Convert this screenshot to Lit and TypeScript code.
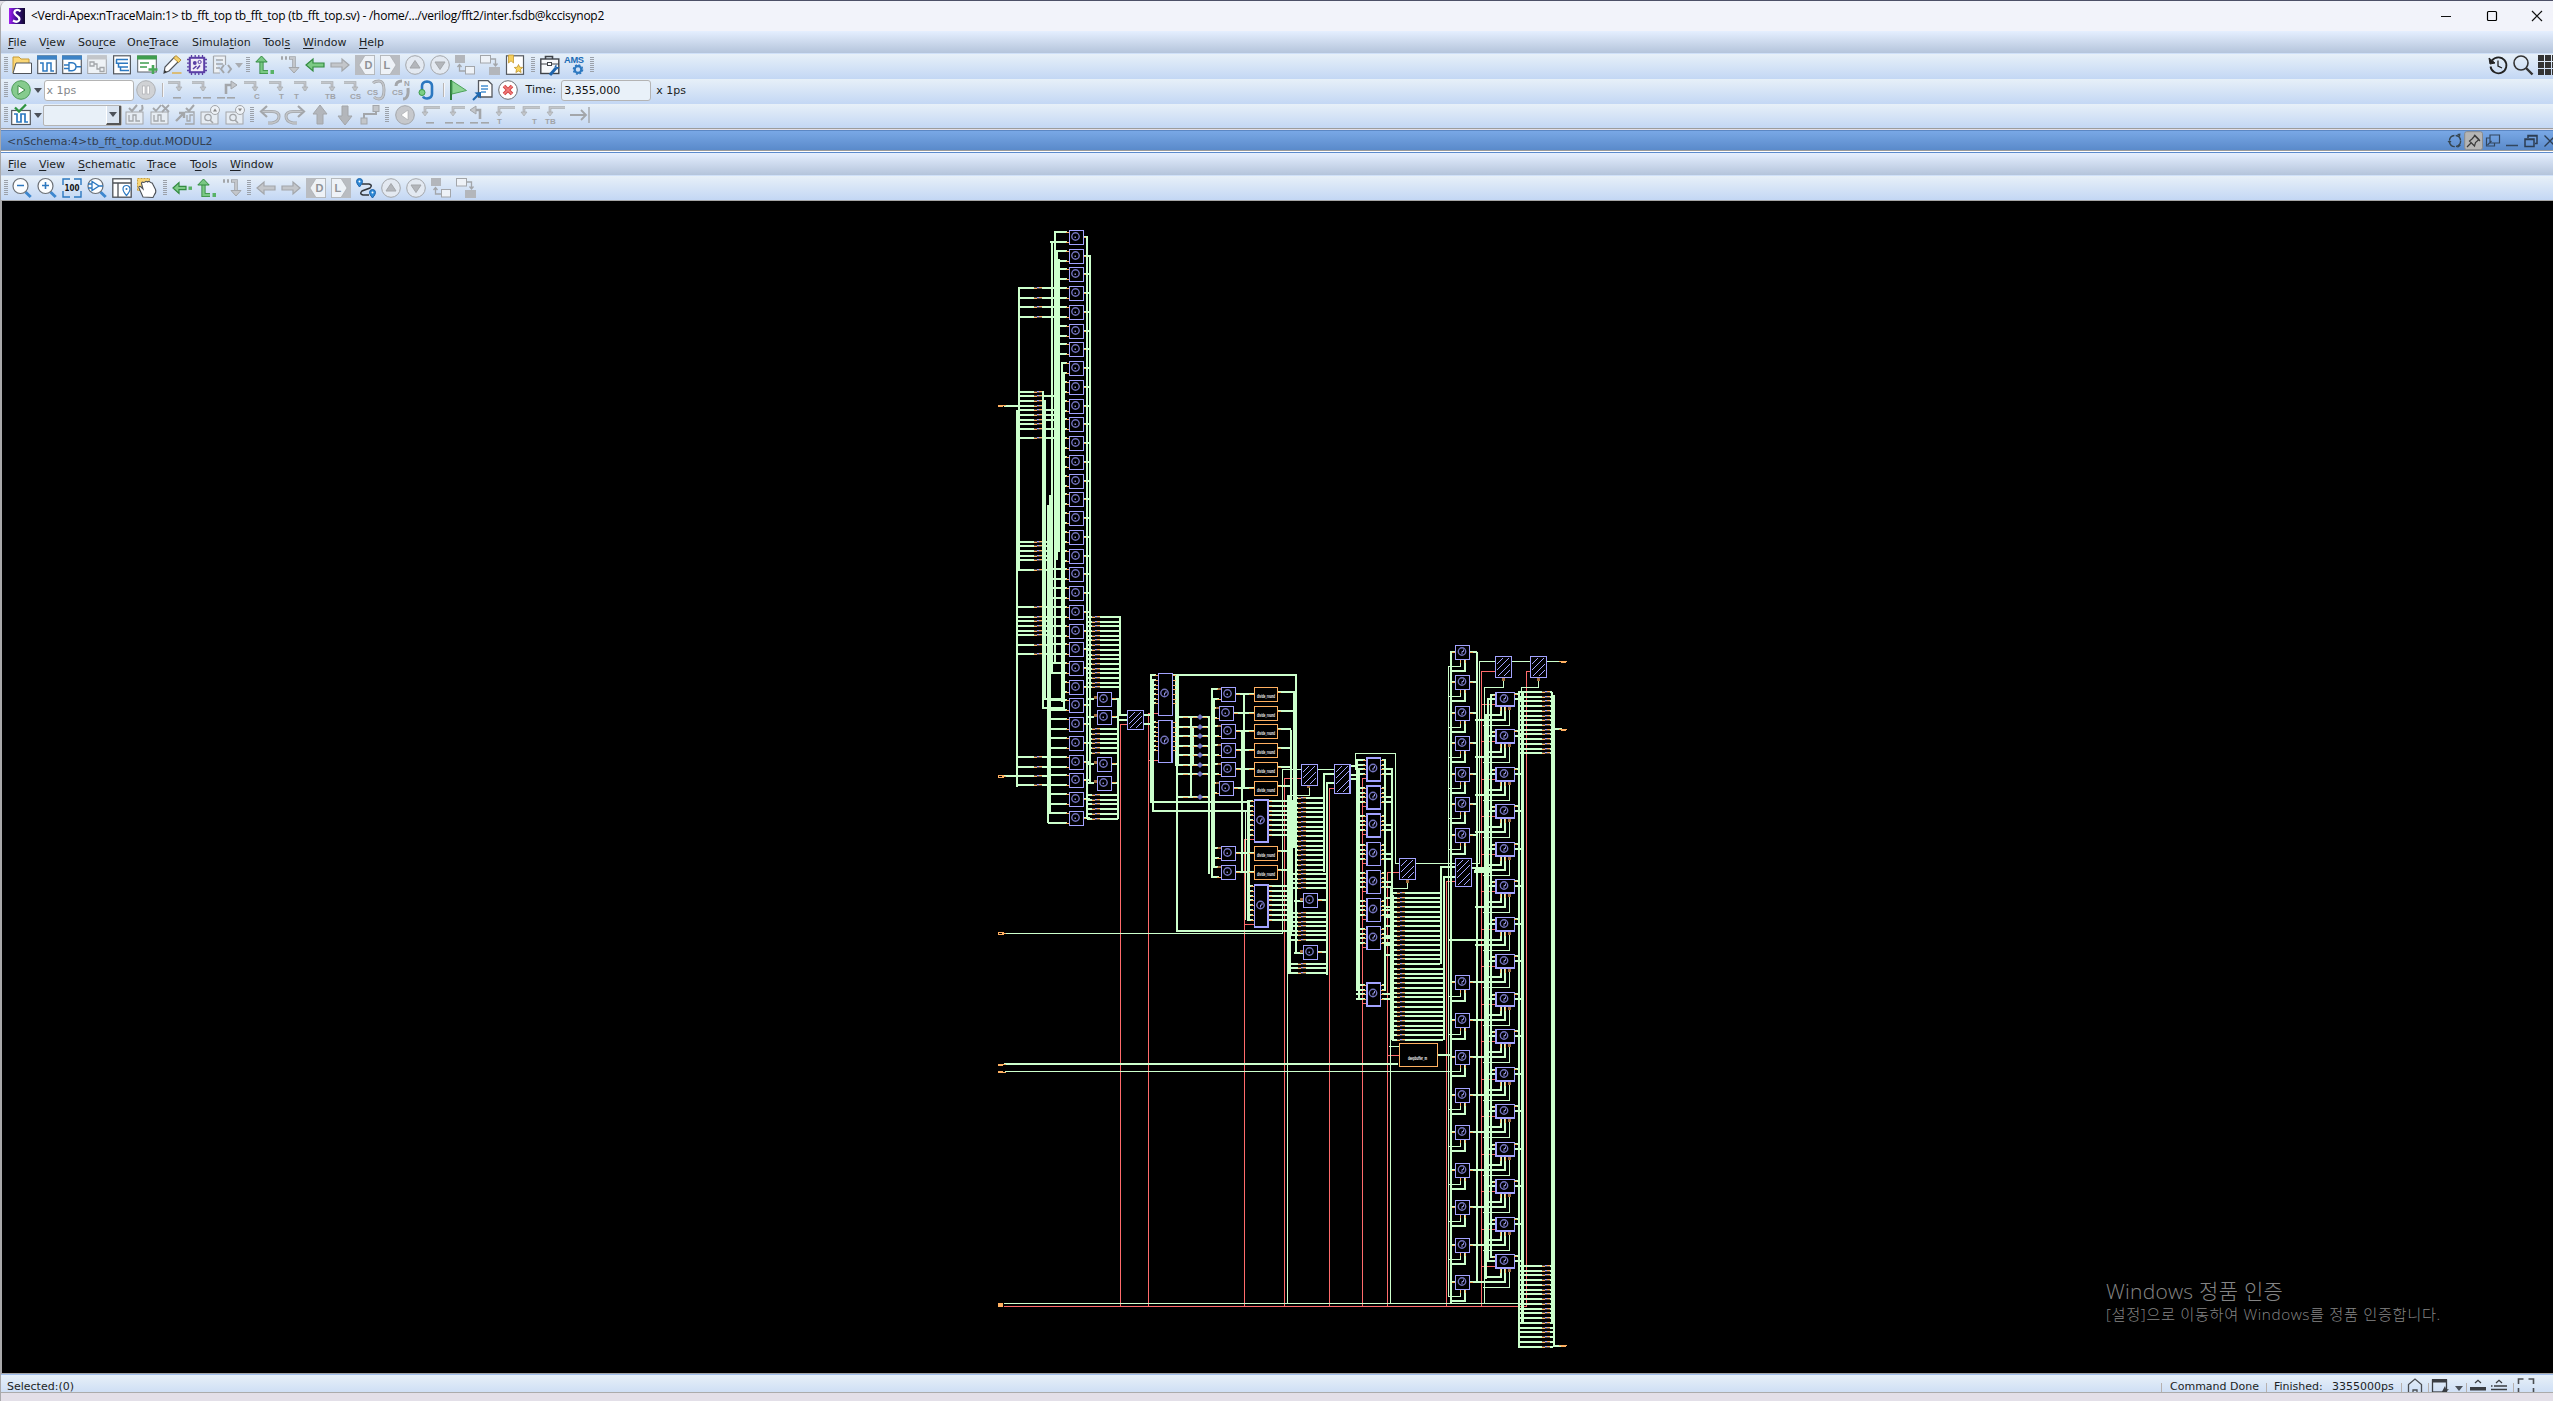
import { LitElement, html, css, svg, nothing } from "lit";
import { customElement } from "lit/decorators.js";

/* ---------- toolbar icons, drawn on a 20x20 grid ---------- */
const G = "#a3a6aa";
const LG = "#c3c6ca";
const arrowDown = (x: number, y: number) => svg`<path d="M${x - 3} ${y - 4}h6l-3 4z" fill=${LG} stroke=${G} stroke-width=".6"/>`;
const glyph = (t: string, x: number, y: number) =>
  svg`<text x=${x} y=${y} font-size="8" font-weight="700" fill="#a0a3a8" font-family="Liberation Sans,sans-serif">${t}</text>`;
const dash = (...xs: number[]) => xs.map((x) => svg`<rect x=${x} y="17" width="8" height="1.6" fill=${G}/>`);
const step = (sx: number, t = "", tx = 8) => svg`
  <path d="M${sx} 2.5h11v8" fill="none" stroke=${G} stroke-width="2.6"/>
  <path d="M${sx} 2.5h11v8" fill="none" stroke=${LG} stroke-width="1.4"/>
  ${arrowDown(sx + 11, 11)}
  ${t ? glyph(t, tx, 19) : nothing}`;
const back = (sx: number, t = "", tx = 1) => svg`
  <path d="M20 2.5h-${20 - sx}v6" fill="none" stroke=${G} stroke-width="2.6"/>
  <path d="M20 2.5h-${20 - sx}v6" fill="none" stroke=${LG} stroke-width="1.4"/>
  ${arrowDown(sx, 11)}
  ${t ? glyph(t, tx, 19) : nothing}`;
const hArrow = (fill: string, stroke: string, left: boolean) => svg`
  <path d=${left ? "M1 10l7-6v4h11v4H8v4z" : "M19 10l-7-6v4H1v4h11v4z"} fill=${fill} stroke=${stroke} stroke-width="1.2"/>`;
const disc = svg`<circle cx="10" cy="10" r="9.3" fill="#e3e9f1" stroke=${G} stroke-width="1"/>`;
const win = (bar: string) => svg`<rect x=".7" y="1" width="18.6" height="17.5" fill="#fff" stroke="#5a5f66" stroke-width="1.2"/>
  <rect x="0" y=".5" width="20" height="4.2" fill=${bar}/>`;
const lens = (inner: unknown) => svg`
  <path d="M13.5 14l5.2 5" stroke="#3d87cf" stroke-width="3"/>
  <circle cx="8.5" cy="8" r="7.5" fill="#fbfdff" stroke="#6b7076" stroke-width="1.2"/>${inner}`;
const wave = (c: string, x = 0) => svg`<path d="M${3 + x} 8h3v8h4V8h4v8h3" fill="none" stroke=${c} stroke-width="1.5"/>`;
const box = svg`<rect x="1" y="7" width="17" height="12" fill="#e6ecf3" stroke=${G}/>`;

const ICONS: Record<string, unknown> = {
  folder: svg`<path d="M1 18V2h6l2 2h8v4" fill="#fbd775" stroke="#c79a35"/><path d="M1 18.5L4 8h15.5v10.5z" fill="#fff" stroke="#50545a"/>`,
  wave: svg`${win("#3d83c6")}${wave("#2c78c0")}`,
  gate: svg`${win("#3d83c6")}<path d="M2 10h5M2 13.500h5M14 11.700h5M7 7.700h3q4 .5 4 4t-4 4H7z" fill="none" stroke="#2c78c0" stroke-width="1.4"/>`,
  flow: svg`<rect x=".7" y="1" width="18.600" height="17.500" fill="#eef2f6" stroke=${G}/><rect x="0" y=".5" width="20" height="4" fill=${LG}/><path d="M3 7h4v4H3zM7 9h3v5h3M13 12.500h4v4h-4z" fill="none" stroke=${G} stroke-width="1.300"/>`,
  tree: svg`<rect x="1.600" y=".8" width="16.800" height="18" fill="#fff" stroke="#55595f" stroke-width="1.200"/><path d="M4 4.500h12M6 8.300h10M8 12h8M10 15.600h7M4.500 4.500v3.800H7M6.500 8v4H9M8.500 12v3.600H11" fill="none" stroke="#2c78c0" stroke-width="1.500"/>`,
  add: svg`<rect x=".7" y="1" width="18.600" height="16" fill="#fff" stroke="#5a5f66"/><rect x="0" y=".5" width="20" height="4" fill="#3f9e4f"/><path d="M3 8h9M3 12h7" stroke="#3f9e4f" stroke-width="1.700"/><path d="M16 10v9M11.500 14.500h9" stroke="#49a858" stroke-width="2.600"/>`,
  pencil: svg`<path d="M2 18l1-6L12.500 2l4.500 4L7 16z" fill="#fff" stroke="#50545a" stroke-width="1.200"/><path d="M11.500 3L14 .6l5 4.400-2.500 2.600z" fill="#f3cf68" stroke="#b8923a"/><path d="M2 18l.6-3L5 17z" fill="#333"/><rect x="10" y="17" width="9.500" height="2" fill="#d9bc79"/>`,
  chip: svg`<path d="M4.500 0v20M8.200 0v20M11.800 0v20M15.500 0v20M0 4.500h20M0 8.200h20M0 11.800h20M0 15.500h20" stroke="#5b3fa5" stroke-width="1.300"/><rect x="2.800" y="2.800" width="14.400" height="14.400" fill="#efeaf8" stroke="#5b3fa5" stroke-width="2"/><circle cx="7.800" cy="8" r="1.900" fill="#5b3fa5"/><circle cx="12.600" cy="7" r="1.600" fill="none" stroke="#5b3fa5"/><path d="M6 14l3.500-3M10 14l3-3.500" stroke="#5b3fa5" stroke-width="1.600"/>`,
  code: svg`<path d="M1.500 1h12v9M1.500 1v17H8" fill="#edf1f5" stroke=${G} stroke-width="1.200"/><path d="M4 5h7M4 9h7M4 13h4" stroke=${G} stroke-width="1.400"/><path d="M12 10l-3 4 3 4M16 10l3 4-3 4" fill="none" stroke=${G} stroke-width="2"/>`,
  upGreen: svg`<path d="M6.500 5v12H13" fill="none" stroke="#338b41" stroke-width="4.200"/><path d="M6.500 5v12H13" fill="none" stroke="#79c883" stroke-width="2.400"/><path d="M.8 7L6.500 1l5.700 6z" fill="#79c883" stroke="#338b41"/><path d="M15.500 15h3.500v4h-3.500z" fill="#58b266"/>`,
  downGray: svg`<path d="M1 3h2M5 3h2M9 3h5v10" fill="none" stroke=${G} stroke-width="3.600"/><path d="M10 3h4v10" fill="none" stroke=${LG} stroke-width="2"/><path d="M9 12.500h10L14 18z" fill=${LG} stroke=${G}/>`,
  leftGreen: hArrow("#7cca85", "#338b41", true),
  leftDot: svg`<path d="M1 10l6-5.500v3.800h7v3.400H7v3.800z" fill="#7cca85" stroke="#338b41" stroke-width="1.200"/><rect x="16.500" y="8.500" width="3.500" height="3.400" fill="#58b266"/>`,
  leftGray: hArrow(LG, G, true),
  rightGray: hArrow(LG, G, false),
  d: svg`<rect x="0" y="0" width="20" height="20" fill="#b9bcc1"/><path d="M4 10l6-9.500h9.500v19H10z" fill="#eef2f7" stroke=${G} stroke-width=".6"/><text x="9.500" y="14" font-size="11" font-weight="700" fill="#8f9297" font-family="Liberation Sans,sans-serif">D</text>`,
  l: svg`<rect x="0" y="0" width="20" height="20" fill="#b9bcc1"/><path d="M16 10L10 .5H.5v19H10z" fill="#eef2f7" stroke=${G} stroke-width=".6"/><text x="3.500" y="14" font-size="11" font-weight="700" fill="#8f9297" font-family="Liberation Sans,sans-serif">L</text>`,
  up: svg`${disc}<path d="M5 13l5-7.500 5 7.500z" fill="#b3b6bb" stroke=${G}/>`,
  down: svg`${disc}<path d="M5 7l5 7.500L15 7z" fill="#b3b6bb" stroke=${G}/>`,
  hierUp: svg`<rect x="0" y="0" width="10" height="8" fill="#b3b6bb"/><rect x="10.500" y="11.500" width="9" height="7.500" fill="#eef2f7" stroke=${G}/><path d="M4.500 10v6H10M2.500 12l2-2.500 2 2.500" fill="none" stroke=${G} stroke-width="1.300"/>`,
  hierDown: svg`<rect x=".5" y=".5" width="10" height="7.500" fill="#eef2f7" stroke=${G}/><rect x="9" y="12" width="11" height="8" fill="#b3b6bb"/><path d="M11 4h4.500v6M13.500 8.500l2 2.500 2-2.500" fill="none" stroke=${G} stroke-width="1.300"/>`,
  bookmark: svg`<rect x="1.500" y=".8" width="17" height="18.500" fill="#fff" stroke="#55595f" stroke-width="1.200"/><path d="M3.500 0h5v8L6 5.800 3.500 8z" fill="#f6cf5c" stroke="#c59a32" stroke-width=".8"/><path d="M13.500 9.500l1.200 2.700 3 .3-2.200 2 .6 3-2.600-1.500-2.600 1.500.6-3-2.200-2 3-.3z" fill="#f9d458" stroke="#bf932c" stroke-width=".8"/>`,
  case: svg`<path d="M5.500 4V1.500h7V4" fill="none" stroke="#3f4349" stroke-width="1.600"/><rect x=".8" y="4" width="18" height="14.500" fill="#f6f8fa" stroke="#3f4349" stroke-width="1.400"/><path d="M1 9h18" stroke="#3f4349" stroke-width="1.200"/><rect x="7.500" y="7.500" width="4" height="3" fill="#fff" stroke="#3f4349"/><path d="M10 20l6-7" stroke="#1e64ad" stroke-width="3"/><path d="M14.500 11.500l2-2.500v3h3l-2.500 2.500z" fill="#1e64ad"/>`,
  ams: svg`<text x="0" y="7.800" font-size="9.300" font-weight="700" fill="#1c6cb5" font-family="Liberation Sans,sans-serif" textLength="20">AMS</text><circle cx="14" cy="14.500" r="3.300" fill="none" stroke="#2c78c0" stroke-width="2.200"/><circle cx="14" cy="14.500" r="4.600" fill="none" stroke="#2c78c0" stroke-width="1.400" stroke-dasharray="2 1.600"/>`,
  play: svg`<circle cx="10" cy="10" r="9.300" fill="#86cb8e" stroke="#4d9b58"/><path d="M7 5.500l7 4.500-7 4.500z" fill="#fff" stroke="#3d8c49"/>`,
  pause: svg`<circle cx="10" cy="10" r="9.300" fill="#d0d2d5" stroke="#adb0b4"/><rect x="6.500" y="6" width="2.500" height="8" fill="#fff" stroke=${G} stroke-width=".6"/><rect x="11" y="6" width="2.500" height="8" fill="#fff" stroke=${G} stroke-width=".6"/>`,
  s1: svg`${step(1)}${dash(6)}`,
  s2: svg`${step(0)}${dash(1, 11)}`,
  s3: svg`<path d="M9 14V5h8" fill="none" stroke=${G} stroke-width="2.600"/><path d="M14 1l6 4-6 4z" fill=${LG} stroke=${G}/>${dash(0, 10)}`,
  s4: step(2, "C", 12), s5: step(2, "T", 12), s6: step(2, "T", 2), s7: step(4, "TB", 8), s8: step(2, "CS", 8),
  loop: svg`<path d="M6 3q2-2 6-2 5 0 5 9t-5 9q-3 0-5-2" fill="none" stroke=${G} stroke-width="3"/><path d="M6 3q2-2 6-2 5 0 5 9t-5 9q-3 0-5-2" fill="none" stroke=${LG} stroke-width="1.500"/>${glyph("CS", 0, 15)}`,
  loopN: svg`<path d="M4 6q0-5 6-5M16 8q1 11-5 11" fill="none" stroke=${G} stroke-width="3"/>${glyph("CS", 0, 15)}${glyph("N", 12, 6)}`,
  loopBlue: svg`<path d="M5 10V6q0-4 5-4.500 5 .5 5 4.500v8q0 4-5 4.500-3 0-4-2" fill="none" stroke="#2c78c0" stroke-width="2.600"/><circle cx="5" cy="12.500" r="3" fill="#7ccf86" stroke="#3a9a49"/>`,
  flag: svg`<path d="M3 0v20" stroke="#2e7d3c" stroke-width="2"/><path d="M4 1l14.500 9.500L4 14z" fill="#8dd495" stroke="#4da35a"/>`,
  doc: svg`<path d="M5.500.7H15l4 3.800V17H5.500z" fill="#fff" stroke="#55595f" stroke-width="1.300"/><path d="M8 6h7M8 9h7M8 12h5" stroke="#4a91d2" stroke-width="1.300"/><path d="M0 20l5-5" stroke="#1f68b0" stroke-width="2.200"/><path d="M1.500 12.500L8 12v6.500z" fill="#1f68b0"/>`,
  stop: svg`<circle cx="10" cy="10" r="9.300" fill="#fff" stroke="#6a6d72"/><path d="M6 6l8 8M14 6l-8 8" stroke="#d14444" stroke-width="3.600"/><path d="M6 6l8 8M14 6l-8 8" stroke="#f07c7c" stroke-width="1.600"/>`,
  checkWave: svg`<rect x=".7" y="5.500" width="18.600" height="14" fill="#fff" stroke="#55595f" stroke-width="1.200"/><path d="M3 9h3v8h4V9h4v8h3" fill="none" stroke="#2c78c0" stroke-width="1.700"/><path d="M4 2.500l4 4 7-7" fill="none" stroke="#2f9441" stroke-width="2.300"/>`,
  w1: svg`${box}<path d="M4 10v6h4v-6h3v6h4" fill="none" stroke=${G} stroke-width="1.300"/><path d="M4 3l3 3 5-6M14 6q5 0 3-6" fill="none" stroke=${G} stroke-width="2"/>`,
  w2: svg`${box}<path d="M4 10v6h4v-6h3v6h4" fill="none" stroke=${G} stroke-width="1.300"/><path d="M3 3l3 3 5-6M12 0l7 7M19 0l-7 7" fill="none" stroke=${G} stroke-width="1.800"/>`,
  w3: svg`<path d="M10 7h9v12h-9M12 10v6h3v-6h3" fill="none" stroke=${G} stroke-width="1.300"/><path d="M11 3l3 3 5-6" fill="none" stroke=${G} stroke-width="2"/><path d="M1 16l7-7M4 8h5v5" stroke=${G} stroke-width="2.400" fill="none"/>`,
  w4: svg`${box}<circle cx="8" cy="12.500" r="3.200" fill="none" stroke=${G} stroke-width="1.300"/><path d="M10 15l3 3" stroke=${G} stroke-width="1.600"/><circle cx="15" cy="5" r="4.500" fill="#eef2f7" stroke=${G}/><path d="M13 6.500l2-3 2 3z" fill="#888"/>`,
  w5: svg`${box}<circle cx="8" cy="12.500" r="3.200" fill="none" stroke=${G} stroke-width="1.300"/><path d="M10 15l3 3" stroke=${G} stroke-width="1.600"/><circle cx="15" cy="5" r="4.500" fill="#eef2f7" stroke=${G}/><path d="M13 3.500l2 3 2-3z" fill="#888"/>`,
  undo: svg`<path d="M3 6.500h9q7 0 7 5t-7 6.500H8" fill="none" stroke=${G} stroke-width="3"/><path d="M3 6.500h9q7 0 7 5t-7 6.500H8" fill="none" stroke=${LG} stroke-width="1.400"/><path d="M7 1L1 6.500 7 12" fill="none" stroke=${G} stroke-width="2.200"/>`,
  redo: svg`<path d="M17 6.500H8q-7 0-7 5T8 18h4" fill="none" stroke=${G} stroke-width="3"/><path d="M17 6.500H8q-7 0-7 5T8 18h4" fill="none" stroke=${LG} stroke-width="1.400"/><path d="M13 1l6 5.500-6 5.500" fill="none" stroke=${G} stroke-width="2.200"/>`,
  bigUp: svg`<path d="M10 0l7 9h-4v10H7V9H3z" fill="#b3b6bb" stroke=${G}/>`,
  bigDown: svg`<path d="M10 20l7-9h-4V1H7v10H3z" fill="#b3b6bb" stroke=${G}/>`,
  conn: svg`<rect x="13" y=".5" width="6" height="6" fill=${LG} stroke=${G}/><rect x="1" y="13" width="6" height="6" fill=${LG} stroke=${G}/><path d="M4 13V9h12V7" fill="none" stroke=${G} stroke-width="2"/>`,
  backDisc: svg`<circle cx="10" cy="10" r="9.300" fill="#c6c8cc" stroke=${G}/><path d="M13 5v10l-7-5z" fill="#fff" stroke=${G} stroke-width=".6"/>`,
  b1: svg`${back(5)}${dash(6)}`, b2: svg`${back(8)}${dash(0, 11)}`,
  b3: svg`<path d="M10 14V5H4" fill="none" stroke=${G} stroke-width="2.600"/><path d="M6 1L0 5l6 4z" fill=${LG} stroke=${G}/>${dash(0, 11)}`,
  b4: back(4, "T", 2), b5: back(4, "T", 12), b6: back(5, "TB", 0),
  end: svg`<path d="M0 10h16M11 5l5 5-5 5" fill="none" stroke=${G} stroke-width="1.800"/><path d="M19 2v16" stroke=${G} stroke-width="1.400"/>`,
  zoomOut: lens(svg`<path d="M5 7.500h7" stroke="#2c78c0" stroke-width="1.600"/>`),
  zoomIn: lens(svg`<path d="M5 7.500h7M8.500 4v7" stroke="#2c78c0" stroke-width="1.600"/>`),
  hundred: svg`<path d="M8 1H1v6M12 1h7v6M1 13v6h7M12 19h7v-6" fill="none" stroke="#2c78c0" stroke-width="1.400"/><text x="2.500" y="13" font-size="8.500" font-weight="700" fill="#111" font-family="DejaVu Sans,sans-serif" textLength="15" lengthAdjust="spacingAndGlyphs">100</text>`,
  zoomGate: lens(svg`<path d="M5 3.500v9l7-4.500zM1 6h4M1 10h4M12 8h4" fill="none" stroke="#2c78c0" stroke-width="1.300"/>`),
  pinWin: svg`<rect x=".8" y=".8" width="18.400" height="18.400" fill="#fff" stroke="#4d5157" stroke-width="1.300"/><path d="M1 5h18M6 5v14" stroke="#4d5157" stroke-width="1.300"/><path d="M14.500 17.500q-3.500-4-3.500-6.500a3.500 3.500 0 0 1 7 0q0 2.500-3.500 6.500z" fill="#fff" stroke="#2c78c0" stroke-width="1.200"/><circle cx="14.500" cy="11" r="1" fill="#2c78c0"/>`,
  hand: svg`<rect x=".5" y=".5" width="12" height="12" fill="#f8d574" stroke="#c99f3e" stroke-dasharray="2 1"/><path d="M6 19L2 10q-.5-2 1.500-1.500L6 11 4.500 5.500q0-2 2-1L8 4q1-1.500 2.500 0 1.500-1.500 3 .5 2 0 2.500 2l2.500 5q1 3-1 5L16 19.500z" fill="#fff" stroke="#50545a" stroke-width="1.100"/>`,
  route: svg`<path d="M6 6h7q4 1 1 4l-8 3q-3 3 1 4h6" fill="none" stroke="#33373c" stroke-width="1.500"/><path d="M3.500 9Q.5 5.500.5 3.500a3 3 0 0 1 6 0Q6.500 5.500 3.500 9zM16.500 20q-3-3.500-3-5.500a3 3 0 0 1 6 0q0 2-3 5.500z" fill="#2f8ad6" stroke="#1e64ad"/><circle cx="3.500" cy="3.500" r="1" fill="#fff"/><circle cx="16.500" cy="14.500" r="1" fill="#fff"/>`,
  history: svg`<path d="M4 5.500a8 8 0 1 1-1.500 6" fill="none" stroke="#222" stroke-width="1.800"/><path d="M1 3l1 6 5-1z" fill="#222" stroke="#222"/><path d="M10 5.500V11l4 2" fill="none" stroke="#222" stroke-width="1.300"/>`,
  search: svg`<circle cx="8" cy="8" r="7" fill="none" stroke="#333" stroke-width="1.600"/><path d="M13 13l6.500 6.500" stroke="#333" stroke-width="2.400"/>`,
  grid: svg`<path d="M0 0h6v6H0zM7 0h6v6H7zM14 0h6v6h-6zM0 7h6v6H0zM7 7h6v6H7zM14 7h6v6h-6zM0 14h6v6H0zM7 14h6v6H7zM14 14h6v6h-6z" fill="#333"/>`,
  mMin: svg`<path d="M5 10.500h10" stroke="#111"/>`,
  mMax: svg`<rect x="5.500" y="5.500" width="9" height="9" rx="1" fill="none" stroke="#000" stroke-width="1.200"/>`,
  mClose: svg`<path d="M5 5l10 10M15 5L5 15" stroke="#111" stroke-width="1.200"/>`,
  sync: svg`<circle cx="10" cy="10" r="5.600" fill="none" stroke="#36454f" stroke-width="1.400" stroke-dasharray="7.500 1.300"/><path d="M2.500 10h4l-2 2.500zM12 3l3 3 .5-3.500zM12.500 17l.5-3.500 3 1z" fill="#36454f"/>`,
  pin: svg`<rect x=".7" y=".7" width="17.800" height="18" rx="2" fill="#b5b5b5" stroke="#8b8b8b"/><path d="M3 16l4-4M5.500 10l5 5 1-3.500L15 8.500l-4-4-3 3.500z M10 4l6 6" fill="none" stroke="#3b3b3b" stroke-width="1.200"/>`,
  undock: svg`<path d="M7 4h9.500v8H7zM7 7H3.500v8h8v-3M4.500 14l4-4" fill="none" stroke="#33475f" stroke-width="1.200"/>`,
  sMin: svg`<path d="M4 14.500h12" stroke="#33475f" stroke-width="1.600"/>`,
  restore: svg`<path d="M4 8h9v7.500H4zM4 8.500h9M7 7V4.500h9v8h-2M7 5h9" fill="none" stroke="#2c3d52" stroke-width="1.500"/>`,
  sClose: svg`<path d="M4.500 4.500l11 11M15.500 4.500l-11 11" stroke="#2c3d52" stroke-width="1.300"/>`,
  home: svg`<path d="M3.500 19V8.500L10 3l6.500 5.500V19M8 19v-5h4v5" fill="none" stroke="#4a4d52" stroke-width="1.300"/>`,
  winStat: svg`<rect x="2.500" y="4" width="14" height="12" fill="none" stroke="#3a3d42" stroke-width="1.300"/><rect x="2" y="3" width="15" height="3.500" fill="#3a3d42"/><path d="M15 10l1 3 3 .5-3 2 0 3-2-2-3 1z" fill="#3a3d42"/>`,
  upBar: svg`<path d="M7 7l3-2.700L13 7" fill="none" stroke="#3a3d42" stroke-width="1.300"/><rect x="2" y="11" width="16" height="3.500" fill="#3a3d42"/>`,
  upBars: svg`<path d="M7 7l3-2.700L13 7M5 10h13M2 13.500h16M2 10h1.500" fill="none" stroke="#3a3d42" stroke-width="1.300"/>`,
  full: svg`<path d="M2.500 8V3h5M12.500 3h5v5M2.500 12v5M17.500 12v5" fill="none" stroke="#4a4d52" stroke-width="1.600"/>`,
};

@customElement("ui-icon")
class UiIcon extends LitElement {
  static properties = { name: { type: String } };
  declare name: string;
  static styles = css`
    :host { display: block; width: 20px; height: 20px; flex: none; }
    svg { display: block; overflow: visible; }
  `;
  render() {
    return html`<svg width="20" height="20" viewBox="0 0 20 20">${ICONS[this.name]}</svg>`;
  }
}

/* ---------- schematic ---------- */
type Seg = string[];
const wires: Record<string, Seg> = { red: [], green: [], orange: [], brown: [], violet: [], hatch: [] };
const rect = (k: string, x: number, y: number, w: number, h: number) =>
  wires[k].push(`M${x} ${y}h${w}v${h}h${-w}z`);
const H = (x1: number, x2: number, y: number, t = 2, k = "green") => rect(k, x1, Math.round(y), x2 - x1, t);
const V = (x: number, y1: number, y2: number, t = 2, k = "green") => rect(k, x, y1, t, y2 - y1);
const mark = (x: number, y: number) => {
  const r = Math.round(y);
  H(x, x + 8, r, 2, "hatch");
  H(x, x + 3, r + 1, 1, "orange"); H(x + 3, x + 5, r, 1, "violet"); H(x + 5, x + 8, r, 1, "orange");
};
const frames: unknown[] = [];
const labels: unknown[] = [];
const frame = (x: number, y: number, w: number, h: number, color: string) =>
  frames.push(svg`<rect x=${x + 0.5} y=${y + 0.5} width=${w - 1} height=${h - 1} fill="#000" stroke=${color} />`);
const dial = (cx: number, cy: number, hand = false) =>
  labels.push(svg`<circle cx=${cx} cy=${cy} r="3.700" fill="none" stroke="#7373bd" stroke-width="1.400"/>
    ${hand ? svg`<path d="M${cx} ${cy + 2.5}v-2.500h1.500v-2" fill="none" stroke="#9494e6"/>` : svg`<rect x=${cx - 1} y=${cy} width="1.500" height="1.500" fill="#8080cc"/>`}`);
const cell = (x: number, y: number) => { frame(x, y, 15, 15, "#a3a3ff"); dial(x + 6.5, y + 6.5); };
const tall = (x: number, y: number, h: number, thick: boolean, cy: number) => {
  frame(x, y, 15, h, "#a3a3ff");
  if (thick) { rect("violet", x, y, 15, 2); rect("violet", x + 13, y, 2, h); rect("violet", x, y + h - 1, 15, 2); }
  dial(x + 6.5, cy, true);
};
const hatched = (x: number, y: number, h: number) => {
  frame(x, y, 17, h, "#a3a3ff");
  const id = `M${x + 2} ${y + 8}l6 -6M${x + 2} ${y + 14}l12 -12M${x + 3} ${y + h - 2}l12 -12M${x + 9} ${y + h - 2}l6 -6`;
  labels.push(svg`<path d=${id + (h > 25 ? `M${x + 2} ${y + 20}l13 -13` : "")} fill="none" stroke="#a3a3ff"/>`);
};
const tag = (cx: number, y: number, t: string, w: number) =>
  labels.push(svg`<text x=${cx - w / 2} y=${y} font-size="4.500" font-weight="700" fill="#fff" font-family="Liberation Sans,sans-serif" textLength=${w} lengthAdjust="spacingAndGlyphs">${t}</text>`);

function build() {
  // trunks beside the first column
  V(1054, 231, 663); V(1056, 250, 560, 2); V(1058, 259, 552, 2);
  V(1051, 241, 505, 2); V(1042, 392, 708, 2); V(1044, 400, 700, 2);
  V(1049, 495, 813, 2); V(1047, 505, 823, 2); V(1051, 505, 674, 2);
  V(1061, 362, 702, 2); V(1063, 372, 710, 2);
  H(1042, 1064, 698); H(1042, 1064, 707);
  V(1018, 287, 571); V(1016, 410, 787);
  for (const y of [287, 297, 306, 316]) { H(1018, 1067, y); mark(1034, y); }
  for (const y of [391, 395, 400, 405, 409, 414, 419, 423, 428, 437]) { H(1018, [395, 409, 414, 419, 428, 437].includes(y) ? 1055 : 1044, y); mark(1034, y); }
  for (const y of [541, 545, 550, 555, 559, 569, 606, 616, 620, 625, 630, 634, 644, 653, 756, 766, 775, 784]) { H(1016, 1050, y); mark(1034, y); }
  H(1004, 1018, 405); H(1004, 1018, 775);
  for (let i = 0; i < 32; i++) {
    const y = 230 + Math.round(18.74 * i);
    const from = i === 0 ? 1054 : i === 1 ? 1056 : i < 7 ? 1060 : i < 25 ? (i > 17 && i < 24 ? 1053 : 1061) : 1048;
    H(i === 0 ? 1054 : from, 1067, y + 1); H(i === 0 ? 1050 : from, 1067, y + 11);
    H(1066, 1069, y + 2, 1, "orange"); H(1066, 1069, y + 12, 1, "orange");
    H(1084, i === 0 ? 1088 : 1090, y + 6, 2); H(1084, 1086, y + 7, 1, "orange");
    cell(1069, y);
  }
  V(1086, 236, 819); V(1089, 255, 784);
  V(1119, 616, 716); V(1117, 698, 819);
  for (let i = 0; i < 16; i++) { const y = 616 + 4.69 * i; H(1088, 1120, y); mark(1092, y); }
  for (let i = 0; i < 6; i++) { const y = 728 + 4.8 * i; H(1091, 1118, y); mark(1092, y); }
  for (let i = 0; i < 6; i++) { const y = 794 + 4.7 * i; H(1087, 1118, y); mark(1092, y); }
  for (const y of [692, 710, 757, 776]) {
    H(1087, 1094, y + 6); rect("brown", 1094, y + 4, 3, 3); H(1112, 1118, y + 6); H(1112, 1116, y + 6, 1, "orange"); cell(1097, y);
  }
  H(1119, 1127, 714); H(1119, 1127, 719); hatched(1127, 710, 20);
  H(1144, 1151, 714); H(1144, 1152, 723); H(1120, 1127, 724, 1, "red");

  // second stage
  V(1150, 674, 803); V(1152, 680, 812);
  V(1175, 675, 766, 4); V(1176, 766, 932);
  H(1150, 1250, 801); H(1152, 1247, 810); H(1176, 1288, 930); H(1173, 1297, 674);
  for (const [top, thick] of [[673, 0], [720, 1]] as const) {
    for (const d of [2, 7, 12, 16, 21, 26, 30]) {
      H(1151, 1156, top + d - 1); H(1155, 1158, top + d, 1, "orange");
      H(1175, 1178, top + d - 1); H(1173, 1176, top + d, 1, "orange");
    }
    H(1148, 1158, top + 40, 1, "red");
    tall(1158, top, 43, false, top + 20);
    if (thick) rect("violet", 1171, top, 2, 43);
  }
  for (const y of [717, 727, 736, 746, 755, 765, 774, 797]) {
    H(1176, 1210, y - 1); H(1183, 1188, y, 1, "orange"); H(1193, 1197, y, 1, "orange"); H(1203, 1207, y, 1, "orange");
    labels.push(svg`<path d="M1197 ${y}l3 -3 3 3 -3 3z" fill="#6e6ec0"/>`);
  }
  V(1190, 717, 797); V(1192, 727, 765); V(1208, 716, 874); V(1211, 688, 878); V(1213, 698, 867);
  V(1243, 693, 789); V(1241, 731, 872);
  V(1247, 802, 920, 3); V(1245, 812, 920, 1);
  for (const [x, y] of [[1221, 687], [1219, 706], [1221, 724], [1221, 743], [1221, 762], [1219, 781], [1221, 846], [1221, 865]]) {
    H(1212, x - 2, y + 1); H(1212, x - 2, y + 11); H(x - 4, x, y + 2, 1, "orange"); H(x - 4, x, y + 12, 1, "orange");
    rect("brown", x - 3, y + 1, 3, 2);
    H(x + 15, 1254, y + 6); H(x + 15, x + 19, y + 7, 1, "orange"); H(1249, 1254, y + 7, 1, "orange");
    cell(x, y);
    H(1278, y > 715 ? 1291 : 1295, y + 4); H(1278, 1281, y + 5, 1, "orange");
    frame(1254, y, 24, 15, "#ffb061"); tag(1266, y + 11, "divide_round", 18);
  }
  for (const top of [799, 884]) {
    for (const d of [2, 7, 12, 16, 21, 26, 31, 36]) {
      H(1247, 1253, top + d - 1); H(1251, 1254, top + d, 1, "orange"); H(1269, 1290, top + d - 1); H(1269, 1272, top + d, 1, "orange");
    }
    H(1245, 1254, top + 40, 1, "red"); tall(1254, top, 43, true, top + 21);
  }
  V(1290, 730, 936); V(1288, 795, 974, 3); V(1293, 692, 848, 2); V(1295, 674, 953, 2); V(1292, 800, 930, 1);
  V(1282, 769, 934, 1); H(1282, 1302, 769, 1); H(1004, 1283, 933, 1);
  V(1309, 786, 795, 1); rect("brown", 1307, 786, 3, 2); H(1287, 1310, 795, 1); V(1287, 795, 1304, 1);
  H(1284, 1302, 778, 1, "red"); hatched(1301, 764, 22); H(1318, 1334, 769, 1);
  V(1323, 773, 872); V(1326, 782, 975); H(1323, 1334, 773); H(1326, 1334, 782); H(1329, 1334, 788, 1, "red");
  hatched(1334, 764, 30); rect("violet", 1349, 764, 2, 30);
  H(1351, 1358, 765); H(1351, 1360, 774); H(1351, 1360, 778);
  for (let i = 0; i < 16; i++) { const y = 797 + 4.77 * i; H(1295, 1324, y); mark(1298, y); }
  for (const y of [873, 878, 882, 887, 912, 916, 921, 925, 930, 934, 939, 963, 967, 972]) { H(1290, 1327, y); mark(1298, y); }
  for (const y of [893, 945]) { H(1294, 1303, y + 7); H(1318, 1326, y + 6); rect("brown", 1300, y + 5, 3, 3); H(1318, 1322, y + 7, 1, "orange"); cell(1303, y); }

  // third stage
  V(1356, 759, 990); V(1358, 770, 1000, 2);
  H(1355, 1396, 753, 1); V(1355, 753, 770, 1); V(1395, 753, 864, 1); H(1395, 1399, 863, 1);
  V(1384, 759, 990); V(1391, 768, 1040, 2); V(1393, 895, 1040, 1);
  for (const y of [757, 785, 813, 842, 870, 898, 926, 982]) {
    for (const d of [2, 7, 11, 16]) {
      H(1356, 1365, y + d); H(1363, 1366, y + d + 1, 1, "orange");
      H(1382, d > 8 ? 1392 : 1386, y + d); H(1381, 1384, y + d + 1, 1, "orange");
    }
    H(1362, 1366, y + 21, 1, "red");
    frame(1366, y, 15, 24, "#a3a3ff"); rect("violet", 1366, y, 2, 24); rect("violet", 1380, y, 1, 24);
    if (y % 2 || y === 982) { rect("violet", 1366, y, 15, 2); rect("violet", 1366, y + 23, 15, 2); }
    dial(1373, y + 11, true);
  }
  for (let i = 0; i < 32; i++) {
    const y = 892 + 4.74 * i;
    H(i < 15 && i % 2 ? 1384 : 1392, i < 16 ? 1440 : 1443, y); mark(1397, y);
  }
  V(1440, 866, 964); V(1443, 877, 1040, 2); H(1440, 1455, 866); H(1443, 1455, 876);
  H(1387, 1399, 872, 1, "red"); hatched(1399, 858, 22); H(1416, 1455, 863, 1);
  V(1407, 880, 888, 1); rect("brown", 1406, 880, 3, 3); H(1391, 1408, 888, 1); V(1390, 888, 1304, 1);
  frame(1399, 1043, 39, 24, "#ffb061"); tag(1417.5, 1060, "deepbuffer_m", 19);
  H(1389, 1399, 1046, 1); H(1387, 1399, 1055, 1, "red"); H(1438, 1450, 1054);
  H(1004, 1398, 1063); H(1005, 1448, 1071, 1);

  // fourth stage
  hatched(1455, 858, 29); H(1446, 1455, 881, 1, "red");
  H(1472, 1479, 863, 1); V(1479, 661, 864, 1); H(1479, 1495, 661, 1); H(1472, 1492, 867); H(1474, 1490, 870, 3);
  V(1448, 667, 1297, 1); V(1450, 652, 1303); V(1476, 652, 1283);
  [645, 675, 706, 736, 767, 797, 828, 975, 1013, 1050, 1088, 1125, 1163, 1200, 1238, 1275].forEach((y, i) => {
    H(1450, 1455, y + 6); H(1452, 1455, y + 7, 1, "orange");
    H(1470, i < 7 ? 1477 : 1486, y + 6); H(1470, 1473, y + 7, 1, "orange");
    V(1460, y + 15, y + 22, 1); H(1448, 1461, y + 21, 1); V(1464, y + 15, y + 26); H(1450, 1466, y + 25);
    V(1460, y + 15, y + 18, 1, "orange"); V(1465, y + 15, y + 18, 1, "orange");
    frame(1455, y, 15, 15, "#a3a3ff"); dial(1462, y + 6.5, true);
  });
  H(1449, 1500, 939);
  H(1481, 1495, 671, 1, "red"); hatched(1495, 656, 22); H(1512, 1530, 661, 1);
  V(1503, 678, 687, 1); rect("brown", 1502, 678, 3, 3); H(1484, 1504, 687, 1); V(1484, 687, 1304, 1);
  H(1526, 1530, 671, 1, "red"); hatched(1530, 656, 22); H(1547, 1562, 661, 1);
  V(1538, 678, 687, 1); rect("brown", 1537, 678, 3, 3); H(1521, 1539, 687, 1); V(1521, 687, 1304, 1);
  V(1485, 714, 1279, 2); V(1487, 699, 1262, 2); V(1490, 694, 1258, 2);
  V(1518, 693, 1270, 2); V(1521, 692, 1323, 3);
  for (let i = 0; i < 16; i++) {
    const y = 692 + Math.round(37.47 * i);
    H(1490, 1495, y + 2); H(1487, 1495, y + 6); H(1481, 1495, y + 12, 1, "red");
    H(1493, 1495, y + 3, 1, "orange");
    V(1500, y + 15, y + 23); H(1486, 1502, y + 22);
    V(1504, y + 15, y + 28); H(i > 6 ? 1478 : 1475, 1506, y + 27);
    V(1509, y + 15, y + 33, 1); H(1483, 1510, y + 33, 1);
    V(1500, y + 15, y + 19, 1, "orange"); V(1505, y + 15, y + 19, 1, "orange"); rect("brown", 1508, y + 15, 3, 3);
    H(1515, 1519, y + 1); H(1515, 1522, y + 6); H(1514, 1517, y + 2, 1, "orange");
    frame(1495, y, 20, 15, "#a3a3ff"); rect("violet", 1495, y, 2, 15); rect("violet", 1495, y + 13, 20, 2);
    dial(1504, y + 6.5, true);
  }
  for (let i = 0; i < 14; i++) { const y = 691 + 4.72 * i; H(1518, 1552, y); mark(1542, y); }
  for (let i = 0; i < 18; i++) { const y = 1265 + 4.74 * i; H(1518, 1553, y); mark(1542, y); }
  V(1551, 692, 1323, 2); V(1553, 695, 1347, 2); V(1518, 1267, 1347);
  H(1555, 1562, 728); H(1555, 1562, 1345);

  // global nets
  H(1004, 1523, 1303, 1); H(1004, 1527, 1306, 1, "red");
  const reds: [number, number][] = [[1120, 724], [1148, 713], [1244, 839], [1284, 778], [1329, 788], [1362, 778], [1387, 872], [1446, 881], [1481, 671], [1526, 671]];
  for (const [x, y] of reds) V(x, y, 1307, 1, "red");

  // ports
  for (const [x, y, h] of [[998, 405, 2], [998, 1064, 2], [998, 1071, 2], [998, 1303, 4], [1561, 661, 2], [1561, 729, 2], [1561, 1345, 2]])
    rect("orange", x, y, 5, h);
  for (const y of [405, 776, 933, 1064, 1072]) H(1002, 1006, y, 1, "orange");
  for (const y of [661, 729, 1345]) H(1559, 1567, y, 1, "orange");
  frame(998, 775, 6, 3, "#ffb061"); frame(998, 932, 6, 3, "#ffb061");
}
build();

@customElement("schematic-view")
class SchematicView extends LitElement {
  static styles = css`
    :host { display: block; background: #000; overflow: hidden; }
    svg { display: block; }
    .red { fill: #ff6b6b; }
    .green { fill: #ccffcc; }
    .hatch { fill: #55504a; }
    .orange { fill: #ffb061; }
    .brown { fill: #a06c3c; }
    .violet { fill: #a3a3ff; }
  `;
  render() {
    const p = (k: string) => svg`<path class=${k} d=${wires[k].join("")} />`;
    return html`<svg width="2551" height="1172" viewBox="2 201 2551 1172">
      <g shape-rendering="crispEdges">${p("red")}${p("green")}${p("hatch")}${frames}${p("violet")}${p("orange")}${p("brown")}</g>
      <g>${labels}</g>
    </svg>`;
  }
}

/* ---------- window ---------- */
type Item = string | [string, number];
const W = (i: Item) => (typeof i === "string" ? 25 : i[1]);
const ROW1: Item[] = [["grip", 7.5], "folder", "wave", "gate", "flow", "tree", "add", "pencil", "chip", "code", ["ddGray", 8], ["grip", 10], "upGreen", "downGray", "leftGreen", "rightGray", "d", "l", "up", "down", "hierUp", "hierDown", "bookmark", ["grip", 10], ["case", 24], "ams", ["grip", 10]];
const ROW2A: Item[] = [["grip", 7.5], ["play", 23.5], ["dd", 10]];
const ROW2B: Item[] = [["pause", 24], ["sep", 6.5], "s1", "s2", "s3", "s4", "s5", "s6", "s7", "s8", "loop", "loopN", "loopBlue", ["sep", 6], "flag", "doc", "stop"];
const ROW3A: Item[] = [["grip", 7.5], ["checkWave", 23.5], ["dd", 10]];
const ROW3B: Item[] = ["w1", "w2", "w3", "w4", "w5", ["grip", 10], "undo", "redo", "bigUp", "bigDown", "conn", ["grip", 10], "backDisc", "b1", "b2", "b3", "b4", "b5", "b6", "end"];
const ROW4: Item[] = [["grip", 7.5], "zoomOut", "zoomIn", "hundred", "zoomGate", "pinWin", "hand", ["grip", 10], "leftDot", "upGreen", "downGray", ["grip", 9], "leftGray", "rightGray", "d", "l", "route", "up", "down", "hierUp", "hierDown"];
const MENU1: [string, number, number][] = [["File", 0, 31], ["View", 1, 39], ["Source", 3, 49], ["OneTrace", 3, 65], ["Simulation", 6, 71], ["Tools", 4, 40], ["Window", 0, 56], ["Help", 0, 40]];
const MENU2: [string, number, number][] = [["File", 0, 31], ["View", 0, 39], ["Schematic", 0, 69], ["Trace", 0, 43], ["Tools", 1, 40], ["Window", 0, 60]];

@customElement("app-root")
class AppRoot extends LitElement {
  static styles = css`
    :host { display: block; font: 11px/14px "DejaVu Sans", sans-serif; color: #1c1f24; }
    * { box-sizing: border-box; }
    .window { width: 2553px; height: 1401px; display: flex; flex-direction: column; overflow: hidden; background: #e3dfe8; white-space: nowrap; position: relative; }
    .edge { height: 1px; background: #4d5067; flex: none; }
    .frame { flex: 1; display: flex; flex-direction: column; border-left: 1px solid #a9a9ab; min-height: 0; border-radius: 7px 0 0 0; overflow: hidden; }
    .title { height: 30px; flex: none; display: flex; align-items: center; background: #f2f3fa; padding-left: 8px; color: #000; }
    .logo { width: 16px; height: 16px; display: block; }
    .caption { flex: 1; margin-left: 6px; font: 12px/16px "Open Sans", "Noto Sans", sans-serif; letter-spacing: -0.26px; }
    .controls { display: flex; gap: 25.5px; width: 117px; flex: none; }
    .menu { height: 23px; flex: none; display: flex; align-items: center; padding: 2px 0 0 7px; background: linear-gradient(#e5efff, #b4c4db); border-bottom: 1px solid #cfe0f8; }
    .menu u { text-underline-offset: 2px; }
    .bar { height: 25px; flex: none; display: flex; align-items: center; padding: 0 0 3px 1px; background: linear-gradient(#e7f0f8, #c3d7f4); }
    .bar.short { height: 24px; padding-bottom: 2px; }
    .bar.low { border-bottom: 1px solid #a6a6a6; height: 25px; padding-bottom: 1px; }
    .cell { display: flex; justify-content: center; align-items: center; flex: none; height: 20px; }
    .grip { width: 4px; height: 16px; background: repeating-linear-gradient(#9ba1aa 0 1px, transparent 1px 2px); }
    .dd { width: 0; height: 0; border: 4px solid transparent; border-top: 5px solid #4b5058; border-bottom: 0; }
    .dd.gray { border-top-color: #a9acb1; }
    .sep { width: 1px; height: 14px; background: #b9b5b3; margin-left: auto; margin-right: 1px; box-shadow: 1px 0 #f4f6fa; }
    .field { height: 21px; border: 1px solid #b4b4b4; border-radius: 3px; background: #fff; padding: 2px 2px 0; font-size: 11px; line-height: 15px; }
    .field.unit { width: 90px; margin-left: 0.5px; color: #85888c; }
    .field.time { width: 90px; background: #e9f1f9; color: #111; margin-left: 5px; }
    .field.combo { width: 79px; background: #e8f0f8; display: flex; justify-content: flex-end; padding: 0; border-radius: 2px; }
    .drop { width: 15px; height: 19px; background: #d9e3ef; border-right: 2px solid #555; border-bottom: 2px solid #555; border-left: 1px solid #fff; display: flex; align-items: center; justify-content: center; }
    .label { margin-left: 5.5px; }
    .after { margin-left: 5px; padding-top: 2px; }
    .right { margin-left: auto; display: flex; gap: 5px; width: 65px; flex: none; }
    .sub { height: 25px; flex: none; border-top: 1px solid #9c9c9c; display: flex; flex-direction: column; }
    .subbar { margin-top: 1px; height: 21px; border-top: 1px solid #5b87c4; border-bottom: 1px solid #9a9a9a; display: flex; align-items: center; padding-left: 6px; background: linear-gradient(#79a8e6, #5a8aca); color: #333f50; font-size: 11px; }
    .subbar span { padding-top: 2px; }
    .subtools { margin-left: auto; display: flex; width: 108px; flex: none; }
    .subtools ui-icon { margin-right: -1px; }
    .sub::after { content: ""; height: 2px; background: #fff; border-bottom: 1px solid #5b8acc; flex: 1; }
    schematic-view { height: 1172px; flex: none; border-left: 1px solid #a9a9ab; }
    .status { height: 20px; flex: none; border-top: 1px solid #a6a6a6; border-bottom: 1px solid #ababab; overflow: hidden; display: flex; background: linear-gradient(#9fbdec 0 1px, #e7f0f8 1px, #cfdff5); padding: 0 0 0 6px; }
    .status span { line-height: 13px; margin-top: 6px; }
    .status ui-icon { margin-top: 2px; }
    .selected { flex: 1; }
    .vs { width: 1px; height: 14px; margin-top: 9px; background: #b7b1ae; flex: none; }
    .tray { display: flex; flex: none; width: 392px; }
    .tray .cmd { width: 97px; padding-left: 8px; margin-right: 0; }
    .tray .fin { width: 65px; padding-left: 7px; }
    .tray .num { width: 69px; }
    .tray .dd { margin: 12px 3px 0 4px; }
    .pad { display: flex; justify-content: center; flex: none; }
    .notice { position: absolute; left: 2106px; top: 1277px; color: #858585; font-family: "Open Sans", "Noto Sans CJK KR", sans-serif; font-weight: 300; }
    .big { font-size: 21px; line-height: 28px; letter-spacing: 0.25px; }
    .small { font-size: 15.3px; line-height: 20px; letter-spacing: 0.6px; margin-top: -1px; }
  `;
  cells(items: Item[]) {
    return items.map((i) => {
      const n = typeof i === "string" ? i : i[0];
      const body = n === "grip" ? html`<i class="grip"></i>` : n === "sep" ? html`<i class="sep"></i>`
        : n === "dd" ? html`<i class="dd"></i>` : n === "ddGray" ? html`<i class="dd gray"></i>`
        : html`<ui-icon name=${n}></ui-icon>`;
      return html`<div class="cell" style="width:${W(i)}px">${body}</div>`;
    });
  }
  menu(items: [string, number, number][]) {
    return html`<nav class="menu">${items.map(([t, k, w]) =>
      html`<span style="width:${w}px">${t.slice(0, k)}<u>${t[k]}</u>${t.slice(k + 1)}</span>`)}</nav>`;
  }
  render() {
    return html`<div class="window">
      <div class="edge"></div>
      <div class="frame">
        <div class="title">
          <svg class="logo" viewBox="0 0 16 16"><defs><linearGradient id="lg" x2="1"><stop stop-color="#a11ff0"/><stop offset=".5" stop-color="#3a0f8c"/><stop offset="1" stop-color="#12082e"/></linearGradient></defs><rect width="16" height="16" fill="url(#lg)"/><path d="M11.500 3.500Q9 1 6.300 2.500 4 5 7.500 7.500q4 2.500 2.500 5Q7.500 15 4 12.500" fill="none" stroke="#fff" stroke-width="2.200"/></svg>
          <span class="caption">&lt;Verdi-Apex:nTraceMain:1&gt; tb_fft_top tb_fft_top (tb_fft_top.sv) - /home/.../verilog/fft2/inter.fsdb@kccisynop2</span>
          <div class="controls"><ui-icon name="mMin"></ui-icon><ui-icon name="mMax"></ui-icon><ui-icon name="mClose"></ui-icon></div>
        </div>
        ${this.menu(MENU1)}
        <div class="bar">${this.cells(ROW1)}<div class="right"><ui-icon name="history"></ui-icon><ui-icon name="search"></ui-icon><ui-icon name="grid"></ui-icon></div></div>
        <div class="bar">${this.cells(ROW2A)}<div class="field unit">x 1ps</div>${this.cells(ROW2B)}<span class="label">Time:</span><div class="field time">3,355,000</div><span class="after">x 1ps</span></div>
        <div class="bar short">${this.cells(ROW3A)}<div class="field combo"><div class="drop"><i class="dd"></i></div></div>${this.cells(ROW3B)}</div>
        <div class="sub"><div class="subbar"><span>&lt;nSchema:4&gt;tb_fft_top.dut.MODUL2</span><div class="subtools">${["sync", "pin", "undock", "sMin", "restore", "sClose"].map((n) => html`<ui-icon name=${n}></ui-icon>`)}</div></div></div>
        ${this.menu(MENU2)}
        <div class="bar low">${this.cells(ROW4)}</div>
        <schematic-view></schematic-view>
        <div class="status"><span class="selected">Selected:(0)</span>
          <div class="tray"><i class="vs"></i><span class="cmd">Command Done</span><i class="vs" style="margin-left:7px"></i><span class="fin">Finished:</span><span class="num">3355000ps</span><i class="vs"></i>
            <div class="pad" style="width:26px"><ui-icon name="home"></ui-icon></div><i class="vs"></i>
            <div class="pad" style="width:22px"><ui-icon name="winStat"></ui-icon></div><i class="dd"></i><i class="vs"></i>
            <div class="pad" style="width:22px"><ui-icon name="upBar"></ui-icon></div><ui-icon name="upBars"></ui-icon><i class="vs" style="margin-left:4px"></i>
            <div class="pad" style="width:24px"><ui-icon name="full"></ui-icon></div></div>
        </div>
      </div>
      <div class="notice"><div class="big">Windows 정품 인증</div><div class="small">[설정]으로 이동하여 Windows를 정품 인증합니다.</div></div>
    </div>`;
  }
}
